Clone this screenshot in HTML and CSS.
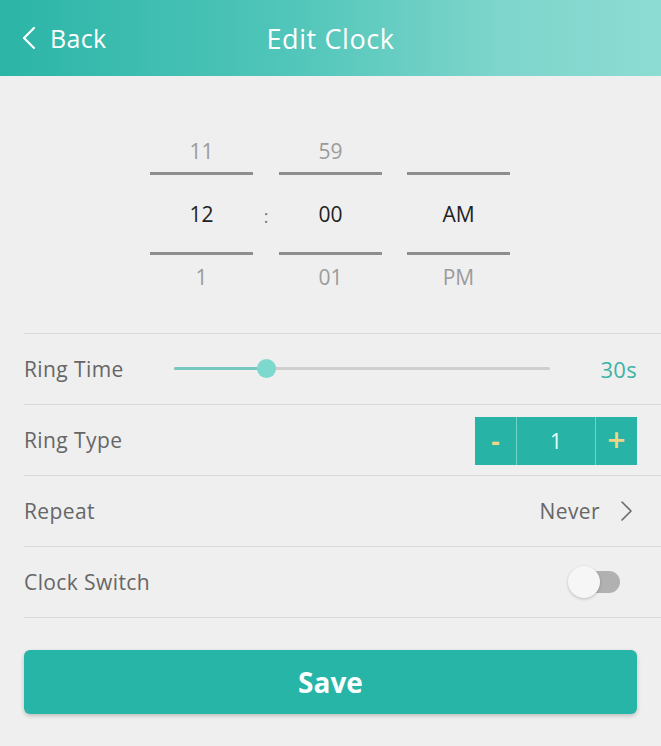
FILE: index.html
```html
<!DOCTYPE html>
<html lang="en">
<head>
<meta charset="utf-8">
<title>Edit Clock</title>
<link rel="stylesheet" href="styles.css">
</head>
<body>
<div class="app">
  <header class="topbar">
    <div class="back">
      <svg class="back-icon" width="14" height="24" viewBox="0 0 14 24"><polyline points="12,2 2,12 12,22" fill="none" stroke="#ffffff" stroke-width="2.2" stroke-linecap="round" stroke-linejoin="round"/></svg>
      <span>Back</span>
    </div>
    <div class="title">Edit Clock</div>
    <div class="spacer"></div>
  </header>

  <section class="picker">
    <div class="col">
      <div class="cell cell-top dim">11</div>
      <div class="rule"></div>
      <div class="cell cell-mid">12</div>
      <div class="rule"></div>
      <div class="cell cell-bot dim">1</div>
    </div>
    <div class="colon">:</div>
    <div class="col">
      <div class="cell cell-top dim">59</div>
      <div class="rule"></div>
      <div class="cell cell-mid">00</div>
      <div class="rule"></div>
      <div class="cell cell-bot dim">01</div>
    </div>
    <div class="gap"></div>
    <div class="col">
      <div class="cell cell-top dim"></div>
      <div class="rule"></div>
      <div class="cell cell-mid">AM</div>
      <div class="rule"></div>
      <div class="cell cell-bot dim">PM</div>
    </div>
  </section>

  <ul class="list">
    <li class="row">
      <span class="label label-fixed">Ring Time</span>
      <div class="slider">
        <div class="track"></div>
        <div class="fill"></div>
        <div class="thumb"></div>
      </div>
      <span class="value-teal">30s</span>
    </li>
    <li class="row">
      <span class="label">Ring Type</span>
      <div class="stepper">
        <span class="step step-btn">-</span>
        <span class="step step-val">1</span>
        <span class="step step-btn step-plus">+</span>
      </div>
    </li>
    <li class="row">
      <span class="label">Repeat</span>
      <div class="repeat">
        <span>Never</span>
        <svg width="14" height="22" viewBox="0 0 14 22"><polyline points="3,2 12,11 3,20" fill="none" stroke="#6a6a6a" stroke-width="1.6" stroke-linecap="round" stroke-linejoin="round"/></svg>
      </div>
    </li>
    <li class="row">
      <span class="label">Clock Switch</span>
      <div class="toggle">
        <div class="toggle-track"></div>
        <div class="toggle-knob"></div>
      </div>
    </li>
  </ul>

  <div class="actions">
    <button class="save">Save</button>
  </div>
</div>
</body>
</html>
```

FILE: styles.css
```css
* { box-sizing: border-box; }
html, body {
  margin: 0;
  padding: 0;
  background: #efefef;
}
body {
  font-family: "Open Sans", "Liberation Sans", sans-serif;
  color: #666;
}
.app {
  width: 661px;
  min-height: 746px;
  background: #efefef;
}
.topbar {
  height: 76px;
  display: grid;
  grid-template-columns: 1fr auto 1fr;
  align-items: center;
  background: linear-gradient(90deg, #2bb5a7 0%, #52c6ba 45%, #7dd5cb 75%, #8ddcd3 100%);
  color: #fff;
}
.back {
  display: flex;
  align-items: center;
  gap: 14px;
  padding-left: 22px;
  font-size: 25px;
  letter-spacing: 0.3px;
}
.back-icon { display: block; }
.title {
  font-size: 27px;
  letter-spacing: 0.6px;
}
.picker {
  display: flex;
  justify-content: center;
  padding: 54px 1px 34px 0;
}
.col {
  width: 103px;
  display: flex;
  flex-direction: column;
}
.cell {
  display: flex;
  align-items: center;
  justify-content: center;
  font-size: 21px;
  color: #222;
}
.cell-top { height: 42px; }
.cell-mid { height: 77px; }
.cell-bot { height: 44px; }
.dim { color: #9b9b9b; }
.rule {
  height: 3px;
  background: #8e8e8e;
}
.colon {
  width: 26px;
  display: flex;
  align-items: center;
  justify-content: center;
  font-size: 18px;
  color: #777;
  padding-top: 2px;
}
.gap { width: 25px; }
.list {
  list-style: none;
  margin: 0 0 0 24px;
  padding: 0;
}
.row {
  height: 71px;
  border-top: 1px solid #d9d9d9;
  display: flex;
  align-items: center;
  justify-content: space-between;
  padding-right: 24px;
}
.row:last-child { border-bottom: 1px solid #d9d9d9; height: 72px; }
.label {
  font-size: 21px;
  color: #666;
  letter-spacing: 0.4px;
}
.label-fixed { width: 150px; flex: none; }
.slider {
  flex: 1;
  position: relative;
  height: 20px;
  margin-right: 50px;
}
.track {
  position: absolute;
  left: 0; right: 0; top: 8px;
  height: 3px;
  background: #cfcfcf;
  border-radius: 2px;
}
.fill {
  position: absolute;
  left: 0; top: 8px;
  width: 92px;
  height: 3px;
  background: #78c8bf;
  border-radius: 2px;
}
.thumb {
  position: absolute;
  left: 83px; top: 0;
  width: 19px; height: 19px;
  border-radius: 50%;
  background: #7dd8ce;
}
.value-teal {
  font-size: 22px;
  color: #3db3a6;
  letter-spacing: 0.3px;
}
.stepper {
  display: flex;
  height: 48px;
  background: #27b4a6;
  margin-top: 1px;
}
.step {
  display: flex;
  align-items: center;
  justify-content: center;
  color: #fff;
  font-size: 21px;
}
.step-btn {
  width: 41px;
  color: #f1d488;
  font-size: 26px;
  font-weight: 700;
}
.step-plus {
  font-size: 32px;
  font-weight: 600;
  padding-bottom: 3px;
}
.step-val {
  width: 80px;
  border-left: 1px solid #72d3c7;
  border-right: 1px solid #72d3c7;
  color: #eaffff;
}
.repeat {
  display: flex;
  align-items: center;
  gap: 19px;
  font-size: 21px;
  letter-spacing: 0.4px;
  color: #666;
  margin-right: 4px;
}
.repeat svg { display: block; }
.toggle {
  position: relative;
  width: 52px;
  height: 32px;
  margin-right: 17px;
}
.toggle-track {
  position: absolute;
  left: 14px; right: 0; top: 5px;
  height: 22px;
  border-radius: 11px;
  background: #b1b1b1;
}
.toggle-knob {
  position: absolute;
  left: 0; top: 0;
  width: 32px; height: 32px;
  border-radius: 50%;
  background: #f6f6f6;
  box-shadow: 0 1px 3px rgba(0,0,0,0.22);
}
.actions {
  padding: 32px 24px 32px;
}
.save {
  display: block;
  width: 100%;
  height: 64px;
  border: none;
  border-radius: 6px;
  background: #26b5a6;
  color: #fbffff;
  font-family: "Open Sans", "Liberation Sans", sans-serif;
  font-size: 28px;
  font-weight: 700;
  box-shadow: 0 2px 4px rgba(0,0,0,0.2);
  cursor: pointer;
}
```
